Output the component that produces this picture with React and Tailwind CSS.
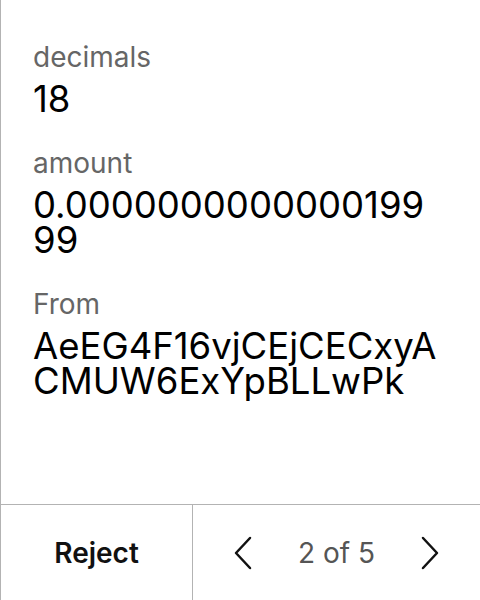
export default function App() {
  const fields = [
    { label: "decimals", value: "18" },
    { label: "amount", value: "0.000000000000019999" },
    { label: "From", value: "AeEG4F16vjCEjCECxyACMUW6ExYpBLLwPk" },
  ];
  return (
    <div
      className="w-[480px] h-[600px] flex flex-col bg-white border-l border-[#b3b3b3]"
      style={{ fontFamily: "Inter, 'Noto Sans', sans-serif" }}
    >
      <div className="flex-1 flex flex-col pl-8 pr-[40px] pt-[40px] gap-[29px]">
        {fields.map((f) => (
          <div key={f.label} className="flex flex-col gap-[8px]">
            <div className="text-[28px] leading-[34px] text-[#666666]">{f.label}</div>
            <div className="text-[36.5px] leading-[35px] text-black break-all">{f.value}</div>
          </div>
        ))}
      </div>
      <div className="h-[96px] flex border-t border-[#b3b3b3]">
        <div className="w-[192px] flex items-center justify-center border-r border-[#b3b3b3]">
          <span className="text-[28px] font-semibold text-[#111111]">Reject</span>
        </div>
        <div className="flex-1 flex items-center justify-between pl-[40px] pr-[40px]">
          <svg width="20" height="34" viewBox="0 0 20 34" fill="none">
            <path d="M17 2 L3 17 L17 32" stroke="#111" strokeWidth="2.5" strokeLinecap="round" strokeLinejoin="round" />
          </svg>
          <span className="text-[28px] text-[#555555]">2 of 5</span>
          <svg width="20" height="34" viewBox="0 0 20 34" fill="none">
            <path d="M3 2 L17 17 L3 32" stroke="#111" strokeWidth="2.5" strokeLinecap="round" strokeLinejoin="round" />
          </svg>
        </div>
      </div>
    </div>
  );
}
